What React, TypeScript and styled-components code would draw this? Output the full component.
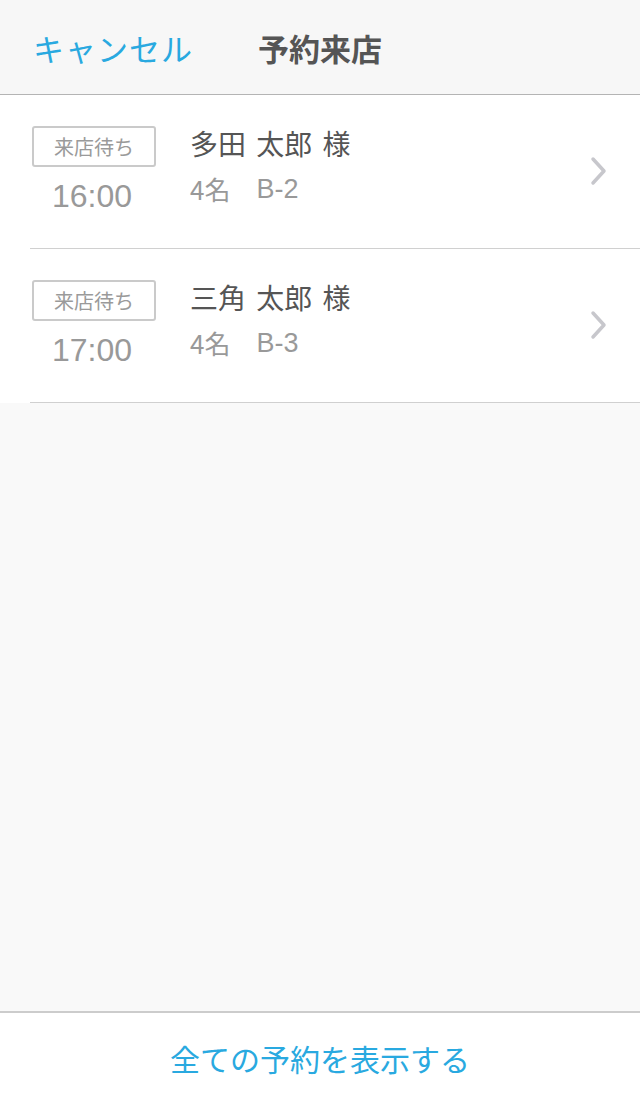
import React from "react";
import styled, { createGlobalStyle } from "styled-components";

const Global = createGlobalStyle`
  html, body { margin: 0; padding: 0; }
  body {
    background: #f9f9f9;
    font-family: "Noto Sans CJK JP", "Noto Sans", sans-serif;
  }
`;

const Page = styled.div`
  width: 640px;
  height: 1102px;
  display: flex;
  flex-direction: column;
  background: #f9f9f9;
`;

const Header = styled.header`
  height: 94px;
  border-bottom: 1px solid #b4b4b4;
  background: #f7f7f7;
  display: flex;
  align-items: center;
  padding-left: 33px;
  box-sizing: content-box;
`;

const Cancel = styled.span`
  font-size: 31px;
  color: #29a9e0;
  width: 225px;
  line-height: 1;
  letter-spacing: 1px;
`;

const Title = styled.h1`
  margin: 0;
  font-size: 31px;
  font-weight: 700;
  color: #555;
  line-height: 1;
`;

const List = styled.ul`
  list-style: none;
  margin: 0;
  padding: 0 0 0 30px;
  background: #fff;
`;

const Row = styled.li`
  border-bottom: 1px solid #d0d0d0;
  display: flex;
  align-items: flex-start;
  padding-top: 31px;
  box-sizing: border-box;
  height: 154px;
`;

const Left = styled.div`
  width: 128px;
  display: flex;
  flex-direction: column;
  align-items: center;
`;

const Badge = styled.div`
  width: 124px;
  height: 41px;
  box-sizing: border-box;
  border: 2px solid #cacaca;
  border-radius: 3px;
  display: flex;
  align-items: center;
  justify-content: center;
  font-size: 20px;
  color: #9a9a9a;
  line-height: 1;
`;

const Time = styled.div`
  margin-top: 13px;
  font-family: "Liberation Sans", Arial, sans-serif;
  font-size: 32px;
  color: #999;
  line-height: 1;
  margin-left: -4px;
`;

const Info = styled.div`
  flex: 1;
  margin-left: 32px;
  display: flex;
  flex-direction: column;
`;

const Name = styled.div`
  font-size: 28px;
  color: #555;
  line-height: 1;
  margin-top: 3px;
  word-spacing: 4px;
`;

const Sub = styled.div`
  margin-top: 19px;
  font-size: 26px;
  color: #999;
  line-height: 1;
  display: flex;
  gap: 26px;
`;

const Table = styled.span`
  font-family: "Liberation Sans", Arial, sans-serif;
  font-size: 27px;
`;

const Chevron = styled.svg`
  width: 18px;
  height: 30px;
  margin-top: 30px;
  margin-right: 32px;
`;

const Spacer = styled.div`
  flex: 1;
`;

const Footer = styled.footer`
  height: 89px;
  border-top: 2px solid #cccccc;
  background: #fff;
  display: flex;
  align-items: center;
  justify-content: center;
`;

const FooterLink = styled.span`
  font-size: 30px;
  color: #29a9e0;
  line-height: 1;
`;

const reservations = [
  { time: "16:00", name: "多田 太郎 様", people: "4名", table: "B-2" },
  { time: "17:00", name: "三角 太郎 様", people: "4名", table: "B-3" },
];

export default function App() {
  return (
    <Page>
      <Global />
      <Header>
        <Cancel>キャンセル</Cancel>
        <Title>予約来店</Title>
      </Header>
      <List>
        {reservations.map((r) => (
          <Row key={r.time}>
            <Left>
              <Badge>来店待ち</Badge>
              <Time>{r.time}</Time>
            </Left>
            <Info>
              <Name>{r.name}</Name>
              <Sub>
                <span>{r.people}</span>
                <Table>{r.table}</Table>
              </Sub>
            </Info>
            <Chevron viewBox="0 0 18 30">
              <path d="M3 3 L14 15 L3 27" fill="none" stroke="#c7c7cc" strokeWidth="3.5" strokeLinecap="round" strokeLinejoin="round" />
            </Chevron>
          </Row>
        ))}
      </List>
      <Spacer />
      <Footer>
        <FooterLink>全ての予約を表示する</FooterLink>
      </Footer>
    </Page>
  );
}
